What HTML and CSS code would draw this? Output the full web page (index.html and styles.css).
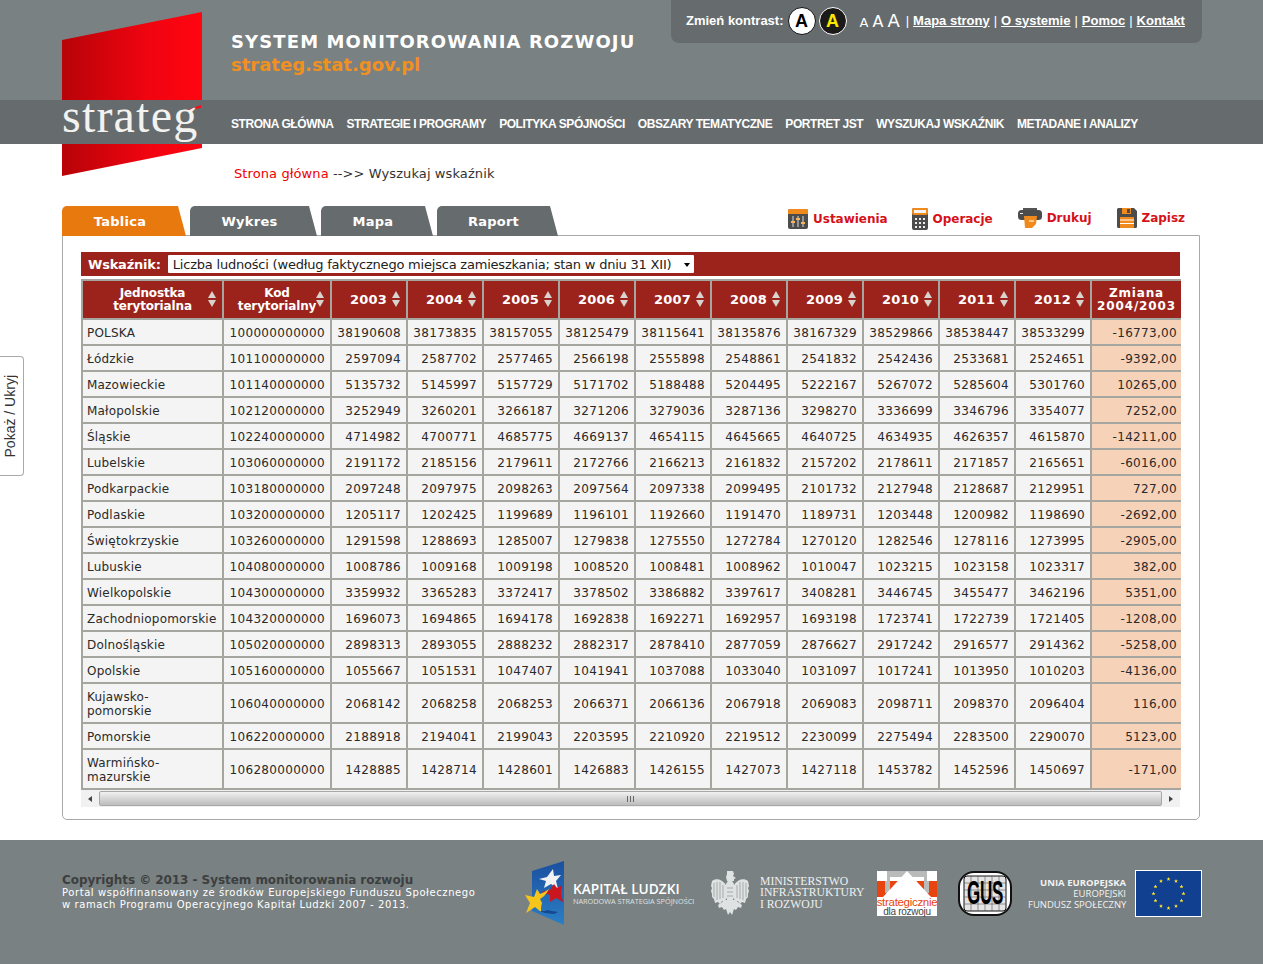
FILE: index.html
```html
<!DOCTYPE html>
<html lang="pl">
<head>
<meta charset="utf-8">
<title>System monitorowania rozwoju</title>
<link rel="stylesheet" href="styles.css">
</head>
<body>
<header class="masthead">
  <div class="top">
    <div class="titles">
      <div class="title">SYSTEM MONITOROWANIA ROZWOJU</div>
      <div class="url">strateg.stat.gov.pl</div>
    </div>
    <div class="tools">
      <span class="tl">Zmień kontrast:</span>
      <span class="ct ct-w">A</span>
      <span class="ct ct-k">A</span>
      <span class="sizes"><span class="s1">A</span><span class="s2">A</span><span class="s3">A</span></span>
      <span class="sep">|</span><a class="tlink">Mapa strony</a><span class="sep">|</span><a class="tlink">O systemie</a><span class="sep">|</span><a class="tlink">Pomoc</a><span class="sep">|</span><a class="tlink">Kontakt</a>
    </div>
  </div>
  <nav class="nav">
    <a>STRONA GŁÓWNA</a><a>STRATEGIE I PROGRAMY</a><a>POLITYKA SPÓJNOŚCI</a><a>OBSZARY TEMATYCZNE</a><a>PORTRET JST</a><a>WYSZUKAJ WSKAŹNIK</a><a>METADANE I ANALIZY</a>
  </nav>
  <div class="logo">
    <svg class="logo-art" width="140" height="164" viewBox="0 0 140 164">
      <defs><linearGradient id="lg" x1="0" x2="1" y1="0" y2="0"><stop offset="0" stop-color="#b70308"/><stop offset=".6" stop-color="#ef0410"/><stop offset="1" stop-color="#ff0510"/></linearGradient></defs>
      <polygon points="0,28 140,0 140,88 0,88" fill="url(#lg)"/>
      <polygon points="0,132 140,132 140,136 0,164" fill="url(#lg)"/>
      <polygon points="125,98 139,93 139,96 128,98" fill="#f0101a"/>
    </svg>
    <span class="logo-word">strateg</span>
  </div>
</header>

<div class="crumbs"><a class="crumb-home">Strona główna</a> --&gt;&gt; Wyszukaj wskaźnik</div>

<main class="main">
  <div class="tabbar">
    <div class="tabs">
      <div class="tab tab-on tab-a">Tablica</div>
      <div class="tab tab-b">Wykres</div>
      <div class="tab tab-c">Mapa</div>
      <div class="tab tab-d">Raport</div>
    </div>
    <div class="actions">
      <a class="act act-1">
        <svg width="20" height="20" viewBox="0 0 20 20"><rect width="20" height="20" rx="2" fill="#4c4c4c"/><path d="M0 2a2 2 0 0 1 2-2h16a2 2 0 0 1 2 2v3H0z" fill="#f08a1d"/><path d="M5 7v11M10 7v11M15 7v11" stroke="#ddd"/><rect x="3" y="12" width="4" height="2" fill="#f5b45a"/><rect x="8" y="9" width="4" height="2" fill="#f5b45a"/><rect x="13" y="13" width="4" height="2" fill="#f5b45a"/></svg>
        Ustawienia</a>
      <a class="act act-2">
        <svg width="16" height="22" viewBox="0 0 16 22"><rect width="16" height="22" rx="2" fill="#4c4c4c"/><rect width="16" height="7" rx="2" fill="#f08a1d"/><rect x="2" y="2" width="12" height="3" fill="#f5f5f5"/><path d="M3 10h2v2H3zM7 10h2v2H7zM11 10h2v2h-2zM3 14h2v2H3zM7 14h2v2H7zM11 14h2v2h-2zM3 18h2v2H3zM7 18h2v2H7zM11 18h2v2h-2z" fill="#eee"/></svg>
        Operacje</a>
      <a class="act act-3">
        <svg width="24" height="20" viewBox="0 0 24 20"><path d="M5 0h14v4H5z" fill="#555"/><rect x="0" y="2" width="24" height="10" rx="3.500" fill="#4c4c4c"/><rect x="2" y="5" width="3" height="1" fill="#eee"/><path d="M6 8h13l-1 8-4 4H7z" fill="#f08a1d"/><path d="M11 12h5v2h-5z" fill="#fbc98a"/></svg>
        Drukuj</a>
      <a class="act act-4">
        <svg width="20" height="20" viewBox="0 0 20 20"><path d="M0 1.500a1.500 1.500 0 0 1 1.500-1.500H17l3 3v15.500a1.500 1.500 0 0 1-1.500 1.500h-17A1.500 1.500 0 0 1 0 18.500z" fill="#4c4c4c"/><rect x="5" y="0" width="9" height="6" fill="#f08a1d"/><rect x="10" y="1" width="3" height="4" fill="#4c4c4c"/><rect x="3" y="9" width="14" height="11" fill="#f08a1d"/><path d="M3 12h14M3 15.500h14" stroke="#fff"/></svg>
        Zapisz</a>
    </div>
  </div>

  <section class="panel">
    <div class="indicator">
      <label class="ind-label">Wskaźnik:</label>
      <div class="select">Liczba ludności (według faktycznego miejsca zamieszkania; stan w dniu 31 XII)<span class="caret"></span></div>
    </div>
    <table class="data" id="data">
      <colgroup><col class="c-name"><col class="c-code"><col class="c-y"><col class="c-y"><col class="c-y"><col class="c-y"><col class="c-y"><col class="c-y"><col class="c-y"><col class="c-y"><col class="c-y"><col class="c-y"><col class="c-ch"></colgroup>
      <thead>
        <tr>
          <th>Jednostka<br>terytorialna<i class="sort"></i></th>
          <th>Kod<br>terytorialny<i class="sort"></i></th>
          <th class="h-y">2003<i class="sort"></i></th>
          <th class="h-y">2004<i class="sort"></i></th>
          <th class="h-y">2005<i class="sort"></i></th>
          <th class="h-y">2006<i class="sort"></i></th>
          <th class="h-y">2007<i class="sort"></i></th>
          <th class="h-y">2008<i class="sort"></i></th>
          <th class="h-y">2009<i class="sort"></i></th>
          <th class="h-y">2010<i class="sort"></i></th>
          <th class="h-y">2011<i class="sort"></i></th>
          <th class="h-y">2012<i class="sort"></i></th>
          <th class="h-ch">Zmiana<br>2004/2003</th>
        </tr>
      </thead>
      <tbody>
        <tr><td class="n">POLSKA</td><td>100000000000</td><td>38190608</td><td>38173835</td><td>38157055</td><td>38125479</td><td>38115641</td><td>38135876</td><td>38167329</td><td>38529866</td><td>38538447</td><td>38533299</td><td class="ch">-16773,00</td></tr>
        <tr><td class="n">Łódzkie</td><td>101100000000</td><td>2597094</td><td>2587702</td><td>2577465</td><td>2566198</td><td>2555898</td><td>2548861</td><td>2541832</td><td>2542436</td><td>2533681</td><td>2524651</td><td class="ch">-9392,00</td></tr>
        <tr><td class="n">Mazowieckie</td><td>101140000000</td><td>5135732</td><td>5145997</td><td>5157729</td><td>5171702</td><td>5188488</td><td>5204495</td><td>5222167</td><td>5267072</td><td>5285604</td><td>5301760</td><td class="ch">10265,00</td></tr>
        <tr><td class="n">Małopolskie</td><td>102120000000</td><td>3252949</td><td>3260201</td><td>3266187</td><td>3271206</td><td>3279036</td><td>3287136</td><td>3298270</td><td>3336699</td><td>3346796</td><td>3354077</td><td class="ch">7252,00</td></tr>
        <tr><td class="n">Śląskie</td><td>102240000000</td><td>4714982</td><td>4700771</td><td>4685775</td><td>4669137</td><td>4654115</td><td>4645665</td><td>4640725</td><td>4634935</td><td>4626357</td><td>4615870</td><td class="ch">-14211,00</td></tr>
        <tr><td class="n">Lubelskie</td><td>103060000000</td><td>2191172</td><td>2185156</td><td>2179611</td><td>2172766</td><td>2166213</td><td>2161832</td><td>2157202</td><td>2178611</td><td>2171857</td><td>2165651</td><td class="ch">-6016,00</td></tr>
        <tr><td class="n">Podkarpackie</td><td>103180000000</td><td>2097248</td><td>2097975</td><td>2098263</td><td>2097564</td><td>2097338</td><td>2099495</td><td>2101732</td><td>2127948</td><td>2128687</td><td>2129951</td><td class="ch">727,00</td></tr>
        <tr><td class="n">Podlaskie</td><td>103200000000</td><td>1205117</td><td>1202425</td><td>1199689</td><td>1196101</td><td>1192660</td><td>1191470</td><td>1189731</td><td>1203448</td><td>1200982</td><td>1198690</td><td class="ch">-2692,00</td></tr>
        <tr><td class="n">Świętokrzyskie</td><td>103260000000</td><td>1291598</td><td>1288693</td><td>1285007</td><td>1279838</td><td>1275550</td><td>1272784</td><td>1270120</td><td>1282546</td><td>1278116</td><td>1273995</td><td class="ch">-2905,00</td></tr>
        <tr><td class="n">Lubuskie</td><td>104080000000</td><td>1008786</td><td>1009168</td><td>1009198</td><td>1008520</td><td>1008481</td><td>1008962</td><td>1010047</td><td>1023215</td><td>1023158</td><td>1023317</td><td class="ch">382,00</td></tr>
        <tr><td class="n">Wielkopolskie</td><td>104300000000</td><td>3359932</td><td>3365283</td><td>3372417</td><td>3378502</td><td>3386882</td><td>3397617</td><td>3408281</td><td>3446745</td><td>3455477</td><td>3462196</td><td class="ch">5351,00</td></tr>
        <tr><td class="n">Zachodniopomorskie</td><td>104320000000</td><td>1696073</td><td>1694865</td><td>1694178</td><td>1692838</td><td>1692271</td><td>1692957</td><td>1693198</td><td>1723741</td><td>1722739</td><td>1721405</td><td class="ch">-1208,00</td></tr>
        <tr><td class="n">Dolnośląskie</td><td>105020000000</td><td>2898313</td><td>2893055</td><td>2888232</td><td>2882317</td><td>2878410</td><td>2877059</td><td>2876627</td><td>2917242</td><td>2916577</td><td>2914362</td><td class="ch">-5258,00</td></tr>
        <tr><td class="n">Opolskie</td><td>105160000000</td><td>1055667</td><td>1051531</td><td>1047407</td><td>1041941</td><td>1037088</td><td>1033040</td><td>1031097</td><td>1017241</td><td>1013950</td><td>1010203</td><td class="ch">-4136,00</td></tr>
        <tr class="tall"><td class="n">Kujawsko-<br>pomorskie</td><td>106040000000</td><td>2068142</td><td>2068258</td><td>2068253</td><td>2066371</td><td>2066136</td><td>2067918</td><td>2069083</td><td>2098711</td><td>2098370</td><td>2096404</td><td class="ch">116,00</td></tr>
        <tr><td class="n">Pomorskie</td><td>106220000000</td><td>2188918</td><td>2194041</td><td>2199043</td><td>2203595</td><td>2210920</td><td>2219512</td><td>2230099</td><td>2275494</td><td>2283500</td><td>2290070</td><td class="ch">5123,00</td></tr>
        <tr class="tall"><td class="n">Warmińsko-<br>mazurskie</td><td>106280000000</td><td>1428885</td><td>1428714</td><td>1428601</td><td>1426883</td><td>1426155</td><td>1427073</td><td>1427118</td><td>1453782</td><td>1452596</td><td>1450697</td><td class="ch">-171,00</td></tr>
      </tbody>
    </table>
    <div class="hscroll">
      <span class="sb-btn"><i class="arr-l"></i></span>
      <span class="sb-thumb"><i class="grip"></i></span>
      <span class="sb-btn"><i class="arr-r"></i></span>
    </div>
  </section>
</main>

<aside class="toggle"><span>Pokaż / Ukryj</span></aside>

<footer class="footer">
  <div class="copy">
    <div class="copy-t">Copyrights © 2013 - System monitorowania rozwoju</div>
    <div class="copy-s">Portal współfinansowany ze środków Europejskiego Funduszu Społecznego<br>w ramach Programu Operacyjnego Kapitał Ludzki 2007 - 2013.</div>
  </div>
  <div class="partners">
    <div class="p-kl">
      <svg width="40" height="64" viewBox="0 0 40 64">
        <defs><linearGradient id="kb" x1="0" x2="0" y1="0" y2="1"><stop offset="0" stop-color="#1a4f9f"/><stop offset="1" stop-color="#2b7fc4"/></linearGradient></defs>
        <polygon points="7,10 39,0 39,64 7,50" fill="url(#kb)"/>
        <path d="M28 8l1 7 7-1-5 6 2 8-7-5-7 4 2-7-7-2 8-2z" fill="#f2f2f2"/>
        <path d="M37 24l-1 8 2 9-7-4-6 4 0-7-9-3 9-2 4-6 3 4z" fill="#c9161f"/>
        <path d="M24 28c-3 6-7 9-9 10l2 4c-1 3-1 6-1 9l-6-5-9 6 4-10-5-8 9 2 3-8 3 5c3-1 6-3 9-5z" fill="#f5c51c"/>
        <path d="M14 50h6l2-1 5 1 6 1-4 2-9-1z" fill="#16488f"/>
      </svg>
      <div class="kl-t"><b>KAPITAŁ LUDZKI</b><small>NARODOWA STRATEGIA SPÓJNOŚCI</small></div>
    </div>
    <div class="p-mi">
      <svg width="40" height="46" viewBox="0 0 40 46">
        <defs><g id="wing"><path d="M16 15C12 9 6 8 2 11L1 16l1 2-1 3 1 3 0 3 2 2 1 4 3-1 2 2 2-3 3 1 2-7z"/></g></defs>
        <g fill="#dfe2e2">
          <path d="M17 1h6l1 3-1 2 3 2-2 1 0 2h-7l-1-4 1-3z"/>
          <ellipse cx="20" cy="21" rx="5" ry="11"/>
          <use href="#wing"/>
          <use href="#wing" transform="matrix(-1 0 0 1 40 0)"/>
          <path d="M15 30l-7 5 1 3 3-1 2 3 2-1 2 6 2-3 2 3 2-6 2 1 2-3 3 1 1-3-7-5z"/>
        </g>
        <path d="M4 13v14M7 12v18M10 12v17M13 15v13M36 13v14M33 12v18M30 12v17M27 15v13M17 18h6M17 22h6M17 26h6" stroke="#8d9495" stroke-width=".7" fill="none"/>
      </svg>
      <div class="mi-t">MINISTERSTWO<br>INFRASTRUKTURY<br>I ROZWOJU</div>
    </div>
    <div class="p-st">
      <svg class="st-art" width="60" height="45" viewBox="0 0 60 45"><rect width="60" height="45" fill="#fff"/><rect y="10" width="60" height="16" fill="#e8440f"/><path d="M10 0h40v10h2v12h-5V6H13v16H8V10h2z" fill="#b9bbbb"/><polygon points="30,0 54,26 6,26" fill="#fff"/></svg>
      <div class="st-t"><span class="st-a">strategicznie</span><span class="st-b">dla rozwoju</span></div>
    </div>
    <div class="p-gus">
      <svg class="gus-art" width="54" height="45" viewBox="0 0 54 45"><rect x="1" y="1" width="52" height="43" rx="15" fill="#fff" stroke="#111" stroke-width="2"/><rect x="6" y="5" width="42" height="35" rx="3" fill="#e4e4e4" stroke="#111"/><path d="M6 12h42M6 19h42M6 26h42M6 33h42M13 5v35M20 5v35M27 5v35M34 5v35M41 5v35" stroke="#555" stroke-width=".6"/></svg>
      <span class="gus-t">GUS</span>
    </div>
    <div class="p-eu">
      <div class="eu-t"><b>UNIA EUROPEJSKA</b><br>EUROPEJSKI<br>FUNDUSZ SPOŁECZNY</div>
      <svg width="67" height="47" viewBox="0 0 67 47"><defs><polygon id="es" points="0,-2 .6,-.6 2,-.6 .9,.3 1.300,1.800 0,.9 -1.300,1.800 -.9,.3 -2,-.6 -.6,-.6" fill="#ffe12a"/></defs><rect x=".5" y=".5" width="66" height="46" fill="#10408f" stroke="#fff"/><use href="#es" x="33.500" y="9"/><use href="#es" x="41" y="11"/><use href="#es" x="46.500" y="16.500"/><use href="#es" x="48.500" y="23.500"/><use href="#es" x="46.500" y="30.500"/><use href="#es" x="41" y="36"/><use href="#es" x="33.500" y="38"/><use href="#es" x="26" y="36"/><use href="#es" x="20.500" y="30.500"/><use href="#es" x="18.500" y="23.500"/><use href="#es" x="20.500" y="16.500"/><use href="#es" x="26" y="11"/></svg>
    </div>
  </div>
</footer>
</body>
</html>
```

FILE: styles.css
```css
* { box-sizing: border-box; }
html, body { margin: 0; padding: 0; }
body {
  position: relative;
  width: 1263px;
  height: 964px;
  overflow: hidden;
  background: #fff;
  color: #2b2b2b;
  font-family: "DejaVu Sans", Verdana, sans-serif;
  font-size: 12px;
}
a { color: inherit; }

/* header */
.masthead { position: relative; height: 144px; background: #7a8182; }
.top { height: 100px; padding-left: 231px; display: flex; align-items: flex-start; }
.titles { padding-top: 31px; width: 440px; }
.title { color: #fff; font-weight: 700; font-size: 18px; line-height: 22px; letter-spacing: 1.12px; white-space: nowrap; }
.url { color: #f1901f; font-weight: 700; font-size: 18px; line-height: 24px; letter-spacing: 0; }
.tools {
  height: 43px; width: 531px; background: #666c6d; border-radius: 0 0 8px 8px;
  display: flex; align-items: center; padding: 0 0 1px 15px;
  color: #fff; font-family: "Liberation Sans", Arial, sans-serif; font-weight: 700; font-size: 13px;
  white-space: nowrap;
}
.tl { margin: 0 4px 2px 0; }
.ct {
  width: 28px; height: 28px; border-radius: 50%; border: 1px solid #fff;
  display: flex; align-items: center; justify-content: center; font-size: 18px; margin-right: 3px; line-height: 1;
}
.ct-w { background: #fff; color: #000; border-color: #111; }
.ct-k { background: #1c1a18; color: #ffe600; margin-right: 0; }
.sizes { display: flex; align-items: baseline; gap: 4px; margin: 0 2px 2px 13px; font-family: "DejaVu Sans", sans-serif; font-weight: 400; }
.s1 { font-size: 13px; } .s2 { font-size: 16px; } .s3 { font-size: 18px; }
.sep { margin: 0 4px 2px; font-weight: 400; }
.tlink { text-decoration: underline; margin-bottom: 2px; }

.nav {
  height: 44px; background: #666c6d; padding-left: 231px; display: flex; align-items: center; gap: 13px;
  font-family: "Liberation Sans", Arial, sans-serif; font-weight: 700; font-size: 12px; letter-spacing: -.44px; color: #fff;
  white-space: nowrap; padding-top: 3px;
}

.logo { position: absolute; left: 62px; top: 12px; width: 140px; height: 164px; }
.logo-art { display: block; }
.logo-word {
  position: absolute; left: 0; top: 79px; color: #f2f2f0;
  font-family: "Liberation Serif", serif; font-size: 48px; line-height: 50px; letter-spacing: 1.2px;
}

/* crumbs */
.crumbs { padding: 22px 0 0 234px; height: 62px; font-size: 13px; line-height: 15px; color: #333; letter-spacing: .1px; }
.crumb-home { color: #f00000; }

/* tabs */
.main { padding: 0 63px 0 62px; }
.tabbar { position: relative; z-index: 1; display: flex; justify-content: space-between; align-items: flex-end; height: 30px; }
.tabs { display: flex; gap: 4px; }
.tab {
  height: 30px; background: #666c6d; color: #fff; font-weight: 700; font-size: 13px; letter-spacing: .25px;
  display: flex; align-items: center; justify-content: center; padding-right: 8px;
  clip-path: polygon(0 0, calc(100% - 8px) 0, 100% 100%, 0 100%);
  border-radius: 5px 6px 0 0;
}
.tab-on { background: #e8790f; }
.tab-a { width: 124px; } .tab-b { width: 127px; } .tab-c { width: 112px; } .tab-d { width: 121px; }
.actions { display: flex; align-items: flex-start; height: 30px; margin-right: 15px; color: #d5121a; font-weight: 700; font-size: 12px; letter-spacing: -.03px; }
.act { display: flex; align-items: center; gap: 5px; white-space: nowrap; }
.act-1 { margin-top: 3px; margin-right: 24px; }
.act-2 { margin-top: 2px; margin-right: 25px; }
.act-3 { margin-top: 2px; margin-right: 25px; }
.act-4 { margin-top: 2px; }

/* panel */
.panel {
  width: 1138px; height: 585px; margin-top: -1px; border: 1px solid #a9aaa5; border-radius: 0 0 5px 5px; background: #fff;
  padding: 16px 19px 0 18px;
}
.indicator { height: 24px; background: #9b231c; display: flex; align-items: center; padding-left: 7px; margin-bottom: 3px; }
.ind-label { color: #fff; font-weight: 700; font-size: 13px; letter-spacing: -.2px; margin-right: 7px; }
.select {
  width: 526px; height: 18px; background: #fff; border-radius: 1px; color: #222; font-size: 13px; line-height: 18px;
  padding: 1px 0 0 5px; position: relative; white-space: nowrap; letter-spacing: -.21px;
}
.caret { position: absolute; right: 4px; top: 8px; border: 3.500px solid transparent; border-top: 4px solid #000; border-bottom: 0; }

/* table */
.data { width: 1099px; table-layout: fixed; border-collapse: collapse; font-size: 12px; }
.c-name { width: 141px; } .c-code { width: 108px; } .c-y { width: 76px; } .c-ch { width: 90px; }
.data th, .data td { border: 2px solid #a5a69f; padding: 0; }
.data th {
  height: 39px; background: #9b231c; color: #fff; font-size: 12px; font-weight: 700; line-height: 13px; letter-spacing: -.15px;
  text-align: center; position: relative;
}
.data .h-y { text-align: right; padding: 0 19px 0 0; font-size: 13px; letter-spacing: .2px; }
.data .h-ch { letter-spacing: .85px; line-height: 13px; border-right: 0; }
.sort { position: absolute; right: 5px; top: 10px; width: 9px; height: 16px; }
.sort::before, .sort::after { content: ""; position: absolute; left: 0; border-left: 4.500px solid transparent; border-right: 4.500px solid transparent; }
.sort::before { top: 0; border-bottom: 7px solid #d8d4d0; }
.sort::after { bottom: 0; border-top: 7px solid #d8d4d0; }
.data td {
  height: 26px; background: #f4f4f4; color: #2a2a2a; text-align: right; padding: 1px 5px 0 0; letter-spacing: .32px;
  line-height: 14px; white-space: nowrap;
}
.data td.n { text-align: left; padding-left: 4px; letter-spacing: .2px; }
.data td.ch { background: #f6d2b8; padding-right: 4px; border-right: 0; }
.data tr.tall td { height: 40px; }
.hscroll { height: 17px; background: #efefef; display: flex; align-items: stretch; }
.sb-btn { width: 18px; flex: none; display: flex; align-items: center; justify-content: center; background: #f1f1f1; }
.arr-l { border: 3.500px solid transparent; border-right: 4px solid #444; border-left: 0; }
.arr-r { border: 3.500px solid transparent; border-left: 4px solid #444; border-right: 0; }
.sb-thumb {
  flex: 1; margin: 1px 0; background: linear-gradient(#f2f2f2, #d8d8d8 45%, #bdbdbd); border: 1px solid #a8a8a8; border-radius: 2px;
  display: flex; align-items: center; justify-content: center;
}
.grip { width: 7px; height: 6px; background: repeating-linear-gradient(90deg, #666 0 1px, transparent 1px 3px); }

/* side toggle */
.toggle {
  position: absolute; left: -1px; top: 356px; width: 25px; height: 120px; background: #fff;
  border: 1px solid #a9aaa5; border-left: 0; border-radius: 0 4px 4px 0;
  display: flex; align-items: center; justify-content: center; font-family: "Liberation Sans", Arial, sans-serif; font-size: 14px; color: #333;
}
.toggle span { writing-mode: vertical-rl; transform: rotate(180deg); white-space: nowrap; margin-right: 2px; }

/* footer */
.footer {
  position: absolute; left: 0; right: 0; top: 840px; height: 124px; background: #7a8182;
  padding: 21px 61px 0 62px; display: flex; justify-content: space-between; align-items: flex-start;
}
.copy { padding-top: 12px; }
.copy-t { font-weight: 700; font-size: 12px; line-height: 14px; color: #3c3f40; letter-spacing: -.05px; }
.copy-s { font-size: 10px; line-height: 12px; color: #fff; letter-spacing: .58px; white-space: nowrap; }
.partners { display: flex; align-items: center; height: 64px; color: #fff; }
.p-kl { display: flex; align-items: center; width: 185px; }
.kl-t { display: flex; flex-direction: column; margin: 3px 0 0 8px; font-family: "Open Sans", sans-serif; }
.kl-t b { font-weight: 600; font-size: 13.700px; line-height: 14px; white-space: nowrap; }
.kl-t small { font-size: 7.300px; line-height: 11px; white-space: nowrap; color: #dfe2e2; }
.p-mi { display: flex; align-items: center; gap: 10px; width: 167px; }
.mi-t { font-family: "Liberation Serif", serif; font-size: 11.700px; line-height: 11.500px; white-space: nowrap; color: #eef0f0; }
.p-st { position: relative; width: 60px; height: 45px; margin-right: 21px; }
.st-art { display: block; }
.st-t { position: absolute; left: -3px; right: -3px; top: 26px; display: flex; flex-direction: column; align-items: center; font-family: "Liberation Sans", sans-serif; letter-spacing: -.3px; }
.st-a { color: #e8440f; font-size: 11.500px; line-height: 10px; white-space: nowrap; }
.st-b { color: #444; font-size: 10px; line-height: 9px; white-space: nowrap; }
.p-gus { position: relative; width: 54px; height: 45px; margin-right: 16px; }
.gus-art { display: block; }
.gus-t {
  position: absolute; inset: 0; display: flex; align-items: center; justify-content: center;
  font-family: "Liberation Sans", sans-serif; font-weight: 700; font-size: 17px; letter-spacing: -.3px; color: #000; transform: scaleY(1.9);
}
.p-eu { display: flex; align-items: center; gap: 9px; }
.eu-t { width: 98px; text-align: right; font-family: "Open Sans", sans-serif; font-size: 9.500px; line-height: 11px; white-space: nowrap; color: #f2f3f3; }
.eu-t b { font-weight: 700; }
```
